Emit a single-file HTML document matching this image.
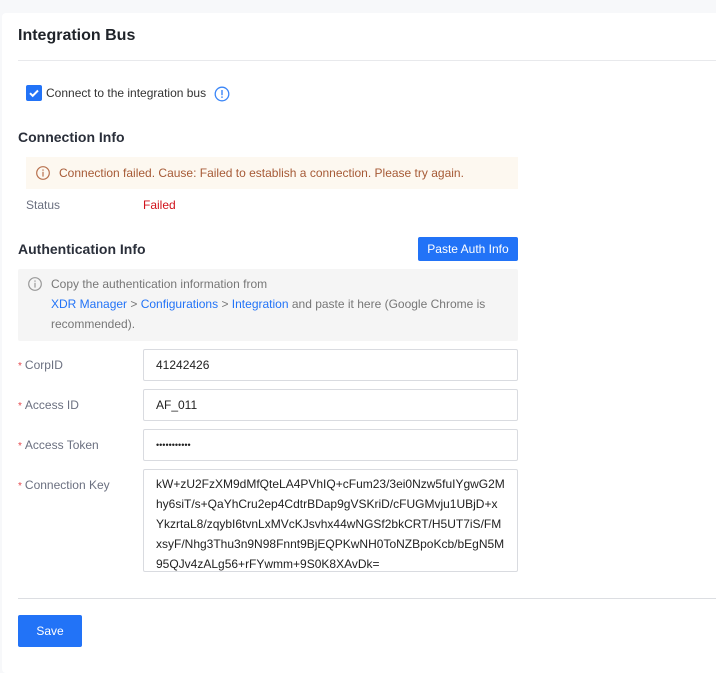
<!DOCTYPE html>
<html><head><meta charset="utf-8"><style>
*{margin:0;padding:0;box-sizing:border-box}
body{width:716px;height:663px;background:#f7f8fa;font-family:"Liberation Sans",Arial,sans-serif;font-size:12px;color:#333;position:relative;overflow:hidden}
.card{position:absolute;left:2px;top:13px;width:720px;height:660px;background:#fff;border-radius:4px}
.a{position:absolute;white-space:nowrap}
.h1{font-size:16px;font-weight:bold;color:#1f2329}
.h2{font-size:14px;font-weight:bold;color:#2a2f3a}
.inp{position:absolute;left:143px;width:375px;height:32px;border:1px solid #d9dbe0;border-radius:2px;background:#fff;padding:0 12px;line-height:30px;font-size:12px;color:#222}
.lbl{position:absolute;left:18px;color:#6b7080}
.lbl b{color:#e5484d;font-weight:normal;margin-right:3px;font-size:10px}
.btn{position:absolute;background:#2273f7;color:#fff;border-radius:2px;text-align:center}
a{color:#2273f7;text-decoration:none}
</style></head><body>
<div class="card"></div>
<div class="a h1" style="left:18px;top:27px">Integration Bus</div>
<div class="a" style="left:18px;top:60px;width:700px;height:1px;background:#e8e9ec"></div>
<div class="a" style="left:26px;top:85px;width:16px;height:16px;background:#2273f7;border-radius:2px">
<svg width="16" height="16" viewBox="0 0 16 16"><path d="M4 8.2l2.7 2.6L12 5.5" stroke="#fff" stroke-width="2" fill="none"/></svg></div>
<div class="a" style="left:46px;top:86px;color:#333">Connect to the integration bus</div>
<svg class="a" style="left:214px;top:86px" width="16" height="16" viewBox="0 0 16 16"><circle cx="8" cy="8" r="6.8" fill="none" stroke="#3b86f7" stroke-width="1.3"/><rect x="7.3" y="4" width="1.4" height="5.2" fill="#3b86f7"/><rect x="7.3" y="10.4" width="1.4" height="1.5" fill="#3b86f7"/></svg>
<div class="a h2" style="left:18px;top:129px">Connection Info</div>
<div class="a" style="left:26px;top:157px;width:492px;height:32px;background:#fdf8f0"></div>
<svg class="a" style="left:35px;top:165px" width="16" height="16" viewBox="0 0 16 16"><circle cx="8" cy="8" r="6.3" fill="none" stroke="#b8714e" stroke-width="1.2"/><rect x="7.4" y="4.4" width="1.2" height="1.4" fill="#b8714e"/><rect x="7.4" y="6.8" width="1.2" height="4.8" fill="#b8714e"/></svg>
<div class="a" style="left:59px;top:166px;color:#a65a36">Connection failed. Cause: Failed to establish a connection. Please try again.</div>
<div class="a" style="left:26px;top:198px;color:#6b7080">Status</div>
<div class="a" style="left:143px;top:198px;color:#d0121b">Failed</div>
<div class="a h2" style="left:18px;top:241px">Authentication Info</div>
<div class="btn" style="left:418px;top:237px;width:100px;height:24px;line-height:24px">Paste Auth Info</div>
<div class="a" style="left:18px;top:269px;width:500px;height:72px;background:#f5f5f5;border-radius:2px"></div>
<svg class="a" style="left:27px;top:276px" width="16" height="16" viewBox="0 0 16 16"><circle cx="8" cy="8" r="6.3" fill="none" stroke="#999" stroke-width="1.2"/><rect x="7.4" y="4.4" width="1.2" height="1.4" fill="#999"/><rect x="7.4" y="6.8" width="1.2" height="4.8" fill="#999"/></svg>
<div class="a" style="left:51px;top:274px;line-height:20px;color:#777;white-space:normal;width:460px">Copy the authentication information from<br><a>XDR Manager</a> &gt; <a>Configurations</a> &gt; <a>Integration</a> and paste it here (Google Chrome is recommended).</div>
<div class="lbl" style="top:358px"><b>*</b>CorpID</div>
<div class="inp" style="top:349px">41242426</div>
<div class="lbl" style="top:398px"><b>*</b>Access ID</div>
<div class="inp" style="top:389px">AF_011</div>
<div class="lbl" style="top:438px"><b>*</b>Access Token</div>
<div class="inp" style="top:429px;font-size:9px">•••••••••••</div>
<div class="lbl" style="top:478px"><b>*</b>Connection Key</div>
<div class="inp" style="top:469px;height:103px;line-height:20px;padding-top:4px;white-space:normal;word-break:break-all">kW+zU2FzXM9dMfQteLA4PVhIQ+cFum23/3ei0Nzw5fuIYgwG2Mhy6siT/s+QaYhCru2ep4CdtrBDap9gVSKriD/cFUGMvju1UBjD+xYkzrtaL8/zqybI6tvnLxMVcKJsvhx44wNGSf2bkCRT/H5UT7iS/FMxsyF/Nhg3Thu3n9N98Fnnt9BjEQPKwNH0ToNZBpoKcb/bEgN5M95QJv4zALg56+rFYwmm+9S0K8XAvDk=</div>
<div class="a" style="left:18px;top:598px;width:700px;height:1px;background:#dcdee2"></div>
<div class="btn" style="left:18px;top:615px;width:64px;height:32px;line-height:32px">Save</div>
</body></html>
